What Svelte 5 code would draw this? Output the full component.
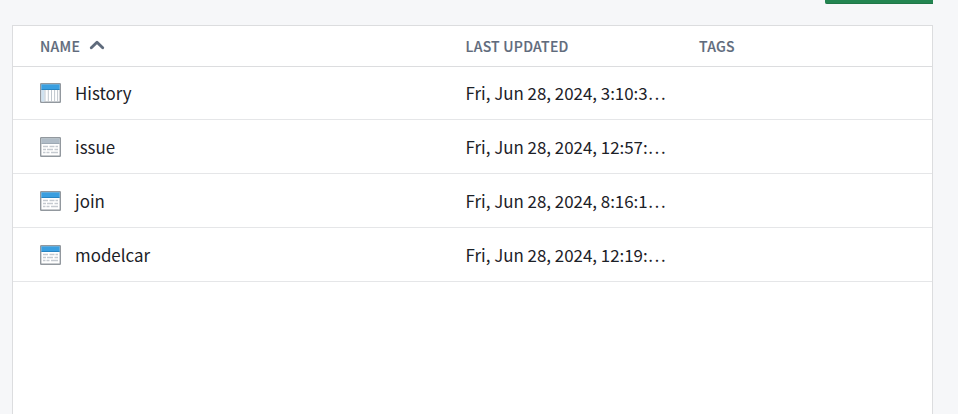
<script>
  const rows = [
    { name: 'History', updated: 'Fri, Jun 28, 2024, 3:10:3…', kind: 'columns' },
    { name: 'issue', updated: 'Fri, Jun 28, 2024, 12:57:…', kind: 'muted' },
    { name: 'join', updated: 'Fri, Jun 28, 2024, 8:16:1…', kind: 'lines' },
    { name: 'modelcar', updated: 'Fri, Jun 28, 2024, 12:19:…', kind: 'lines' }
  ];
</script>

<main class="page">
  <div class="toolbar"><div class="action"></div></div>
  <section class="panel">
    <div class="grid head">
      <span class="sorted">
        <span>NAME</span>
        <svg width="16" height="12" viewBox="0 0 16 12">
          <path d="M2.300 8.700 8 3.200l5.700 5.500" fill="none" stroke="#5f6b7c" stroke-width="2.900" stroke-linecap="round" stroke-linejoin="round" />
        </svg>
      </span>
      <span>LAST UPDATED</span>
      <span>TAGS</span>
    </div>
    {#each rows as row}
      <div class="grid row">
        <span class="name">
          <svg class="icon" class:muted={row.kind === 'muted'} width="21" height="20" viewBox="0 0 21 20">
            <rect x=".7" y=".7" width="19.600" height="18.600" rx=".5" fill="#fff" stroke="#92989e" stroke-width="1.400" />
            <rect class="bar" x="1.300" y="1.300" width="18.400" height="4.700" />
            <rect class="edge" x="1.300" y="6" width="18.400" height="1" />
            {#if row.kind === 'columns'}
              <rect x="1.400" y="7" width="3" height="11.600" fill="#cfe2f0" />
              <path d="M5 7v11.600M8.300 7v11.600M11.500 7v11.600M14.600 7v11.600M17.600 7v11.600" stroke="#c0c7ce" stroke-width="1" />
            {:else}
              <path d="M3 9.500h5M9.500 9.500h5M15.500 9.500h2.500M3 12.500h3M7 12.500h6M14.500 12.500h3.500M3 15.500h2.500M6.500 15.500h3M11 15.500h7" stroke="#c5cad0" stroke-width="1.500" />
            {/if}
          </svg>
          <span>{row.name}</span>
        </span>
        <span>{row.updated}</span>
        <span></span>
      </div>
    {/each}
  </section>
</main>

<style>
  :global(body) { background: #f6f7f9; }
  .page {
    box-sizing: border-box;
    width: 958px;
    height: 414px;
    overflow: hidden;
    display: flex;
    flex-direction: column;
    padding: 0 25px 0 12px;
    background: #f6f7f9;
    font-family: "Noto Sans CJK SC", "Noto Sans", sans-serif;
  }
  .toolbar { height: 25px; flex: none; display: flex; justify-content: flex-end; }
  .action {
    box-sizing: border-box;
    width: 108px;
    height: 4px;
    background: #238551;
    border-bottom: 1px solid #1f7748;
    border-bottom-left-radius: 2px;
  }
  .panel {
    flex: 1;
    background: #fff;
    border: 1px solid #dcdddf;
    border-bottom: 0;
  }
  .grid {
    display: grid;
    grid-template-columns: 425.600px 233.400px 1fr;
    align-items: center;
    box-sizing: border-box;
    padding-left: 27px;
    white-space: nowrap;
  }
  .head {
    height: 41px;
    border-bottom: 1px solid #dcdddf;
    color: #5f6b7c;
    font-size: 14px;
    font-weight: 500;
    line-height: 20px;
    letter-spacing: 0.26px;
    -webkit-text-stroke: 0.15px #5f6b7c;
  }
  .sorted { display: flex; align-items: center; gap: 9px; }
  .sorted svg { margin-top: -3px; }
  .row {
    height: 54px;
    border-bottom: 1px solid #e5e6e8;
    color: #1c2127;
    font-size: 16.900px;
    line-height: 24px;
  }
  .head + .row { height: 53px; }
  .name { display: flex; align-items: center; gap: 14px; }
  .bar { fill: #3a9fe0; }
  .edge { fill: #2784c2; }
  .muted .bar { fill: #b0bcc7; }
  .muted .edge { fill: #9da9b4; }
</style>
